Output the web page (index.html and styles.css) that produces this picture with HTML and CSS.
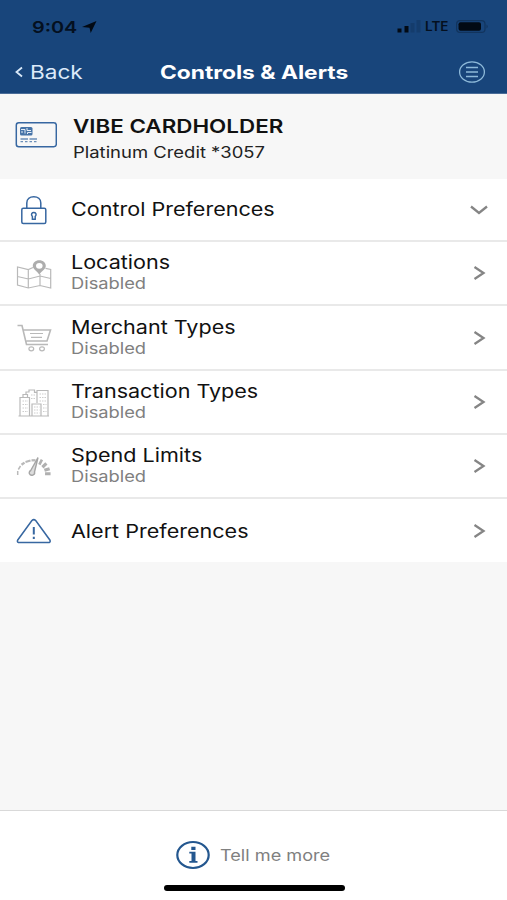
FILE: index.html
```html
<!DOCTYPE html>
<html lang="en">
<head>
<meta charset="utf-8">
<title>Controls &amp; Alerts</title>
<link rel="stylesheet" href="styles.css">
</head>
<body>
<div class="app">
  <header class="top">
    <div class="status">
      <span class="wide time">9:04</span>
      <svg class="arrow" width="15" height="12" viewBox="0 0 15 12"><path d="M14.500 0 8.700 12 7.500 6.800 0 6Z"/></svg>
      <svg class="signal" width="24" height="13" viewBox="0 0 24 13"><path d="M.5 8.500h4v4h-4zM7.500 6h4v6.500h-4z"/><path class="dim" d="M13.500 3h4v9.500h-4zM19.500 0h4v12.500h-4z"/></svg>
      <span class="wide lte">LTE</span>
      <svg class="battery" width="33" height="13" viewBox="0 0 33 13"><rect class="shell" x=".6" y=".6" width="28.400" height="11.800" rx="3.500"/><rect x="2.500" y="2.300" width="22.500" height="8.400" rx="2"/><path class="nub" d="M30.500 4.500q2.500 2 0 4z"/></svg>
    </div>
    <nav class="nav">
      <svg class="back-icon" width="8" height="12" viewBox="0 0 8 12"><path d="M7 1.500 1.500 6 7 10.500"/></svg>
      <span class="wide back">Back</span>
      <h1 class="wide title">Controls &amp; Alerts</h1>
      <svg class="menu" width="28" height="22" viewBox="0 0 28 22"><ellipse cx="14" cy="11" rx="12.400" ry="10.200"/><path d="M8 6.500h12M8 11h12M8 15.500h12"/></svg>
    </nav>
  </header>

  <section class="card">
    <svg class="icon blue" width="42" height="26" viewBox="0 0 42 26"><rect x="1.300" y=".8" width="40" height="24" rx="2.500"/><rect class="chip" x="5" y="5" width="12.500" height="8.500" rx="1.500"/><path class="etch" d="M6 7.500h4v4M6 10h2M12 6v2.500h4M12.500 12v-1.500h4"/><path class="digits" d="M5.500 17h16.500" stroke-dasharray="7.500 1.500"/><path class="digits" d="M5.500 19.700h16.500" stroke-dasharray="2.500 2"/></svg>
    <div class="words">
      <strong class="wide holder">VIBE CARDHOLDER</strong>
      <span class="wide account">Platinum Credit *3057</span>
    </div>
  </section>

  <main class="list">
    <div class="row head">
      <svg class="icon blue" width="42" height="30" viewBox="0 0 42 30"><rect x="8.800" y="13.200" width="24" height="15.300" rx="1.500"/><path d="M13.800 13V8c0-4 3-6.300 7-6.300s7 2.300 7 6.300v5"/><path d="M19.400 21.500c-4-5.300 6.800-5.300 2.800 0v2.800h-2.800z"/></svg>
      <div class="words"><span class="wide name">Control Preferences</span></div>
      <svg class="chev" width="20" height="18" viewBox="0 0 20 18"><path d="m2 5.500 8 6.500 8-6.500"/></svg>
    </div>
    <div class="row">
      <svg class="icon gray" width="42" height="34" viewBox="0 0 42 34"><path d="M20 11.500l-4.700 2L4.500 11v18l10.800 3 11.700-2.500 10.700 2.500V13.500l-5.200-1.200M15.300 13.500V32M27 18v11.500M4.500 20.500l10.800 2.500L27 20l10.700 2.500"/><path class="fill" fill-rule="evenodd" d="M26.300 4.300c-4 0-6.500 2.500-6.500 5.600 0 3.600 4.500 5 6.500 8.700 2-3.700 6.500-5.100 6.500-8.700 0-3.100-2.500-5.600-6.500-5.600m0 2.600a3.300 2.900 0 1 1 0 5.800 3.300 2.900 0 0 1 0-5.800"/></svg>
      <div class="words"><span class="wide name">Locations</span><span class="wide sub">Disabled</span></div>
      <svg class="chev" width="20" height="18" viewBox="0 0 20 18"><path d="m5.500 3 9 6-9 6"/></svg>
    </div>
    <div class="row tall">
      <svg class="icon gray" width="42" height="34" viewBox="0 0 42 34"><path class="bold" d="M4.500 4.500H9l4.500 19h21.500M10.500 9h27l-3.500 11H13.500"/><path d="M17 12.500h13M18 16.300h11"/><ellipse cx="18.300" cy="27.800" rx="2.400" ry="2"/><ellipse cx="29" cy="27.800" rx="2.400" ry="2"/></svg>
      <div class="words"><span class="wide name">Merchant Types</span><span class="wide sub">Disabled</span></div>
      <svg class="chev" width="20" height="18" viewBox="0 0 20 18"><path d="m5.500 3 9 6-9 6"/></svg>
    </div>
    <div class="row">
      <svg class="icon gray" width="42" height="34" viewBox="0 0 42 34"><path d="M5.500 31h30.500M7 30.500V12.500h9.500v18M10 12V9.500h4.500V12M13 9V7h3V5h5.500v2.300h2.500V18M24 15V5.500h11v25M19 30.500V19h9v11.500"/><path class="windows" d="M9.500 16h5.500M9.500 19.500h5.500M9.500 23h5.500M9.500 26.500h5.500M18 10h5M18 13.500h5M26.500 9h6.500M26.500 12.500h6.500M26.500 16h6.500M30 19.500h3.500M30 23h3.500M30 26.500h3.500M21 22h5.500M21 25h5.500M21 28h5.500"/></svg>
      <div class="words"><span class="wide name">Transaction Types</span><span class="wide sub">Disabled</span></div>
      <svg class="chev" width="20" height="18" viewBox="0 0 20 18"><path d="m5.500 3 9 6-9 6"/></svg>
    </div>
    <div class="row">
      <svg class="icon gray" width="42" height="34" viewBox="0 0 42 34"><path class="g1" d="M4.700 26v-4"/><path class="g1" d="M5.300 20.500 7.500 17"/><path class="g2" d="m8.500 15.800 3-2.200"/><path class="g2" d="m12.500 13 5-1.500"/><path class="g2" d="M18.500 11.300h4"/><path class="g3" d="m26.500 12.500 2.300 1.200M30.300 15.200l2.200 2.300M33.500 19l1 3M34.800 23.300v3"/><path class="needle" d="m25 8.500-7.300 13a2.700 2.500 0 1 0 3.800 1.500z"/></svg>
      <div class="words"><span class="wide name">Spend Limits</span><span class="wide sub">Disabled</span></div>
      <svg class="chev" width="20" height="18" viewBox="0 0 20 18"><path d="m5.500 3 9 6-9 6"/></svg>
    </div>
    <div class="row last">
      <svg class="icon blue" width="42" height="26" viewBox="0 0 42 26"><path d="M18.900 2.500q1.900-1.800 3.800 0l14.300 19.700q.8 2.300-1.900 2.300H6.500q-2.700 0-1.900-2.300z"/><path class="mark" d="M20.800 9v7.500M20.800 18.700v2.300"/></svg>
      <div class="words"><span class="wide name">Alert Preferences</span></div>
      <svg class="chev" width="20" height="18" viewBox="0 0 20 18"><path d="m5.500 3 9 6-9 6"/></svg>
    </div>
  </main>

  <footer class="foot">
    <div class="more">
      <svg class="info" width="34" height="30" viewBox="0 0 34 30"><ellipse cx="17" cy="15" rx="15.700" ry="13"/><path d="M13.300 11.700h6.200v9.300h2v1.800h-8.200V21h2.200v-7.500h-2.200zM15.300 6.700h4.200v3.200h-4.200z"/></svg>
      <span class="wide tell">Tell me more</span>
    </div>
    <div class="home"></div>
  </footer>
</div>
</body>
</html>
```
FILE: styles.css
```css
* { box-sizing: border-box; }
body { margin: 0; font-family: Inter, "Liberation Sans", sans-serif; color: #111; background: #f7f7f7; }
svg { display: block; flex: none; fill: none; }
.app { height: 900px; display: flex; flex-direction: column; overflow: hidden; }

.wide { display: block; width: max-content; white-space: nowrap; transform-origin: 0 50%; transform: scaleX(1.2); }

.top { height: 94px; flex: none; background: #18457b; border-bottom: 1px solid #4a6c98; }
.status { height: 50px; padding-top: 3px; display: grid; grid-template-columns: 50px 315px 28px 31px 1fr; padding-left: 32px; align-items: center; color: #04101f; }
.status svg { fill: #020a14; }
.time { font-size: 16px; font-weight: 600; line-height: 20px; transform: scaleX(1.24); }
.lte { font-size: 12.500px; font-weight: 600; line-height: 16px; transform: scaleX(1.08); }
.signal .dim { fill: #143c6c; }
.battery .shell { fill: none; stroke: #12345d; stroke-width: 1.2; }
.battery .nub { fill: #12345d; }
.nav { height: 43px; display: grid; grid-template-columns: 15px 130px 298px 1fr; padding-left: 15px; align-items: center; color: #fff; }
.back-icon { stroke: #d8e8f8; stroke-width: 1.8; }
.back { font-size: 18.500px; font-weight: 400; line-height: 24px; color: #dceafa; transform: scaleX(1.22); }
.title { margin: 0; font-size: 18.500px; font-weight: 700; line-height: 24px; transform: scaleX(1.23); }
.menu { stroke: #8db9d9; stroke-width: 1.3; }

.card { height: 85px; flex: none; display: flex; align-items: center; padding-left: 15px; background: #f7f7f7; }
.card .icon { margin-bottom: 3px; }
.card .words { margin-left: 15.500px; padding-top: 6px; }
.holder { font-size: 18.500px; font-weight: 600; line-height: 26px; transform: scaleX(1.21); }
.account { font-size: 15.500px; line-height: 27px; color: #222; transform: scaleX(1.19); }

.list { background: #fff; flex: none; }
.row { height: 64px; display: grid; grid-template-columns: 58px 398px 1fr; align-items: center; padding-left: 13px; border-bottom: 2px solid #e9e9e9; }
.row.head { height: 63px; }
.row.tall { height: 65px; }
.row.last { height: 63px; border: 0; }
.name { font-size: 18.500px; line-height: 24px; transform: scaleX(1.165); }
.sub { font-size: 15.500px; line-height: 20px; color: #808080; transform: scaleX(1.18); }
.row:not(.last) .words { padding-bottom: 2px; }
.row.head .words { padding-bottom: 1px; }
.chev { stroke: #858585; stroke-width: 2.300; }

.blue { stroke: #3767a1; stroke-width: 1.5; }
.chip { fill: #4774a8; stroke: none; }
.etch { stroke: #e5edf6; stroke-width: 1; }
.digits { stroke-width: 1.300; stroke: #6b8fb9; }
.mark { stroke-width: 2; }
.gray { stroke: #b9b9b9; stroke-width: 1.200; }
.gray .fill { fill: #adadad; stroke: none; }
.gray .bold { stroke-width: 1.600; }
.gray .windows { stroke: #cdcdcd; stroke-dasharray: 1.500 1; }
.g1 { stroke-width: 1.500; }
.g2 { stroke-width: 2.300; }
.g3 { stroke-width: 5.500; stroke: #b0b0b0; }
.needle { stroke-width: 1.400; fill: #ddd; stroke: #a5a5a5; }

.foot { margin-top: auto; height: 90px; flex: none; background: #fff; border-top: 1px solid #d9d9d9; }
.more { height: 74px; padding: 14px 0 0 176px; display: flex; align-items: center; gap: 10px; }
.info ellipse { stroke: #24578f; stroke-width: 2.200; }
.info path { fill: #24578f; }
.tell { padding-top: 1px; font-size: 15.500px; line-height: 20px; color: #808080; transform: scaleX(1.17); }
.home { width: 181px; height: 6px; margin: 0 0 0 163.500px; background: #000; border-radius: 4px; }
```
